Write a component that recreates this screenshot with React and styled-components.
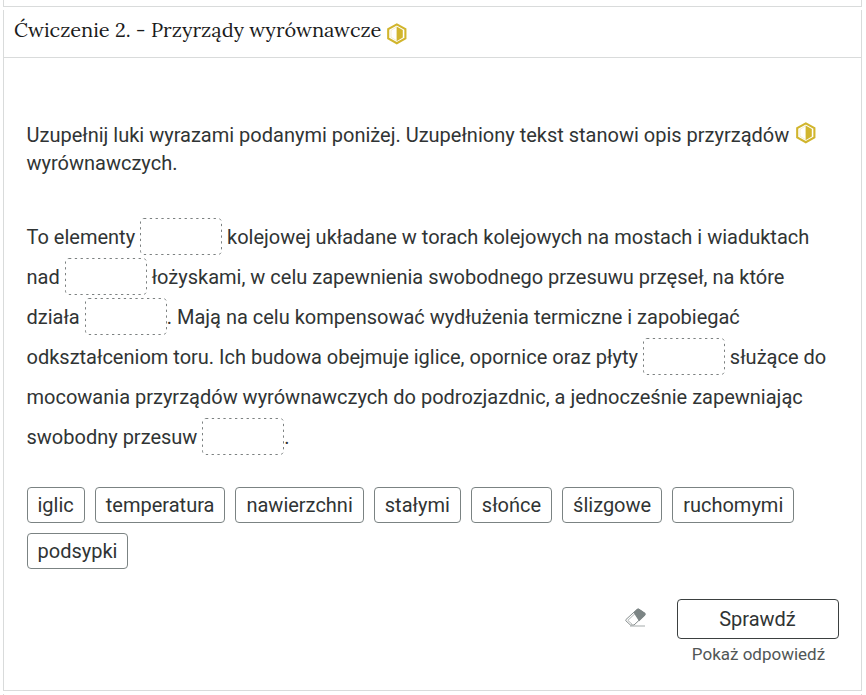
import styled, { createGlobalStyle } from 'styled-components';

const GlobalStyle = createGlobalStyle`
  * {
    box-sizing: border-box;
  }
  body {
    margin: 0;
    background-color: #fff;
    color: #303434;
    font-family: Roboto, sans-serif;
    font-size: 20px;
    overflow: hidden;
  }
`;

const Page = styled.div`
  display: flex;
  flex-direction: column;
  gap: 3px;
  height: 695px;
  padding: 0 4px 0 3px;
  overflow: hidden;
`;
const Neighbour = styled.div`
  flex: none;
  height: ${({ $height }) => $height}px;
  border: 1px solid #d9dbdb;
  border-top: none;
  border-bottom-width: ${({ $first }) => ($first ? '1px' : '0')};
`;
const Panel = styled.section`
  flex: none;
  height: 681px;
  border: 1px solid #d9dbdb;
  border-top: none;
`;
const Header = styled.header`
  display: flex;
  align-items: center;
  gap: 6px;
  height: 48px;
  padding: 0 10px 7px;
  border-bottom: 1px solid #d9dbdb;
`;
const Title = styled.h3`
  margin: 0;
  color: #1b1b1b;
  font: 400 20px/28px Lora, 'Liberation Serif', serif;
  white-space: nowrap;
`;
const Content = styled.div`
  padding: 63px 22px 0 22.5px;
`;
const Instruction = styled.div`
  display: flex;
  justify-content: space-between;
  height: 56px;
  line-height: 28px;

  p {
    width: 770px;
    margin: 0;
  }
`;
const HexIcon = styled.svg`
  flex: none;
  width: 20px;
  height: 22px;
  margin-top: ${({ $top }) => $top || 0}px;
  margin-right: ${({ $right }) => $right || 0}px;
`;
const Text = styled.p`
  margin: 40px 0 0;
  line-height: 40px;
  white-space: nowrap;
`;
const GapBox = styled.span`
  display: inline-block;
  width: 82px;
  height: 37px;
  margin-top: 1px;
  border-radius: 4px;
  vertical-align: top;

  svg {
    display: block;
  }
`;
const Words = styled.div`
  display: flex;
  flex-wrap: wrap;
  gap: 10px;
  margin-top: 30px;
`;
const Word = styled.div`
  height: 36px;
  padding: 0 10px;
  border: 1px solid #7b8383;
  border-radius: 4px;
  line-height: 34px;
`;
const Footer = styled.footer`
  display: flex;
  justify-content: flex-end;
  gap: 31px;
  margin-top: 30px;
`;
const Eraser = styled.svg`
  width: 21px;
  height: 19px;
  margin-top: 9px;
`;
const Actions = styled.div`
  display: flex;
  flex-direction: column;
  align-items: center;
  width: 162px;
`;
const CheckButton = styled.button`
  width: 162px;
  height: 40px;
  padding: 0 1px 0 0;
  border: 1px solid #3b4040;
  border-radius: 4px;
  background: #fff;
  color: #303434;
  font: 400 20px/38px Roboto, sans-serif;
`;
const ShowAnswer = styled.a`
  margin-top: 2px;
  padding-left: 1px;
  color: #515656;
  font-size: 17px;
  line-height: 26px;
`;

const words = [
  'iglic',
  'temperatura',
  'nawierzchni',
  'stałymi',
  'słońce',
  'ślizgowe',
  'ruchomymi',
  'podsypki',
];

function DifficultyIcon(props) {
  return (
    <HexIcon viewBox="0 0 20 22" {...props}>
      <path d="M9.8 1.4 18.4 6.1V15.5L9.8 20.2 1.2 15.5V6.1Z" fill="#fff" stroke="#d1b52d" strokeWidth="2.1" />
      <path d="M9.6 3.4 15.8 7.1V14.5L9.6 18.2Z" fill="#d1b52d" />
      <path d="M9.6 4 4 7.3V14.3L9.6 17.6" fill="none" stroke="#e6d584" strokeWidth="0.4" />
    </HexIcon>
  );
}

// dashes are shorter than the ones of a dashed border
function Gap() {
  return (
    <GapBox>
      <svg width="82" height="37">
        <rect
          x="0.5"
          y="0.5"
          width="81"
          height="36"
          rx="3.5"
          fill="none"
          stroke="#7c8181"
          strokeDasharray="2.3 3.5"
        />
      </svg>
    </GapBox>
  );
}

export default function App() {
  return (
    <>
      <GlobalStyle />
      <Page>
        <Neighbour $height={7} $first />
        <Panel>
          <Header>
            <Title>Ćwiczenie 2. - Przyrządy wyrównawcze</Title>
            <DifficultyIcon $top={7} />
          </Header>
          <Content>
            <Instruction>
              <p>Uzupełnij luki wyrazami podanymi poniżej. Uzupełniony tekst stanowi opis przyrządów wyrównawczych.</p>
              <DifficultyIcon $top={1} $right={23} />
            </Instruction>
            <Text>
              To elementy <Gap /> kolejowej układane w torach kolejowych na mostach i wiaduktach
              <br />
              nad <Gap /> łożyskami, w celu zapewnienia swobodnego przesuwu przęseł, na które
              <br />
              działa <Gap />. Mają na celu kompensować wydłużenia termiczne i zapobiegać
              <br />
              odkształceniom toru. Ich budowa obejmuje iglice, opornice oraz płyty <Gap /> służące do
              <br />
              mocowania przyrządów wyrównawczych do podrozjazdnic, a jednocześnie zapewniając
              <br />
              swobodny przesuw <Gap />.
            </Text>
            <Words>
              {words.map((word) => (
                <Word key={word}>{word}</Word>
              ))}
            </Words>
            <Footer>
              <Eraser viewBox="0 0 21 19">
                <path d="M0.9 11.6 12 1.4Q13 .7 14 1.3L19.6 5.3Q20.4 6.1 19.7 7L9 17H5.4L.9 12.8Q.4 12.2.9 11.6Z" fill="#fff" stroke="#868d8d" />
                <path d="M9.2 4.6 12.6 1.4Q13.3 1 14 1.4L19.7 5.3Q20.4 6.1 19.7 7L14.2 12.2Z" fill="#7c8585" stroke="#7c8585" strokeWidth="1.2" />
                <path d="M2.8 12.4 10 5.6M2.8 12.4 7 16.2" fill="none" stroke="#9aa1a1" strokeWidth="0.8" />
                <path d="M5 18H20" stroke="#a5abab" />
              </Eraser>
              <Actions>
                <CheckButton type="button">Sprawdź</CheckButton>
                <ShowAnswer>Pokaż odpowiedź</ShowAnswer>
              </Actions>
            </Footer>
          </Content>
        </Panel>
        <Neighbour $height={8} />
      </Page>
    </>
  );
}
